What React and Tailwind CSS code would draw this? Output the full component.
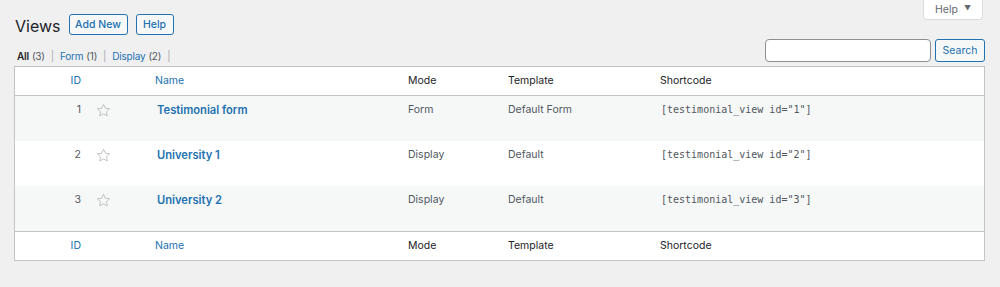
const rows = [
  { id: 1, name: 'Testimonial form', mode: 'Form', template: 'Default Form' },
  { id: 2, name: 'University 1', mode: 'Display', template: 'Default' },
  { id: 3, name: 'University 2', mode: 'Display', template: 'Default' },
];

function Star() {
  return (
    <svg width="15" height="15" viewBox="0 0 20 20" className="block">
      <path
        d="M10 1.8l2.45 5.2 5.65.7-4.15 3.9 1.05 5.6L10 14.45 5 17.2l1.05-5.6L1.9 7.7l5.65-.7z"
        fill="none"
        stroke="#b4b7ba"
        strokeWidth="1.1"
        strokeLinejoin="round"
      />
    </svg>
  );
}

function HeadRow({ top }) {
  return (
    <div className={`flex h-[29px] items-center ${top ? 'border-b' : 'border-t'} border-[#c3c4c7] text-[10.5px]`}>
      <div className="w-[66px] text-right text-[#2271b1]">ID</div>
      <div className="w-[74px]" />
      <div className="w-[253px] text-[#2271b1]">Name</div>
      <div className="w-[100px] text-[#1d2327]">Mode</div>
      <div className="w-[152px] text-[#1d2327]">Template</div>
      <div className="flex-1 text-[#1d2327]">Shortcode</div>
    </div>
  );
}

function Sep() {
  return <span className="mx-[3px] text-[#a7aaad]">|</span>;
}

export default function App() {
  return (
    <div className="relative h-[287px] w-[1000px] overflow-hidden bg-[#f0f0f1] font-['Inter',sans-serif] text-[#3c434a]">
      {/* screen meta help tab */}
      <div className="absolute right-[17px] top-0 flex h-[20px] w-[60px] items-center justify-center gap-[6px] rounded-b-[4px] border border-t-0 border-[#dcdcde] bg-white text-[10.5px] text-[#646970]">
        <span>Help</span>
        <span className="text-[7px]">▼</span>
      </div>

      <div className="flex h-[35px] items-start gap-[8px] pl-[15px] pt-[14px]">
        <h1 className="pt-[4px] text-[16px] leading-[17px] text-[#1d2327]">Views</h1>
        <button className="h-[21px] w-[59px] rounded-[3px] border border-[#2271b1] bg-[#f6f7f7] text-[10.5px] font-medium text-[#2271b1]">
          Add New
        </button>
        <button className="h-[21px] w-[38px] rounded-[3px] border border-[#2271b1] bg-[#f6f7f7] text-[10.5px] font-medium text-[#2271b1]">
          Help
        </button>
      </div>

      <div className="flex items-start justify-between pl-[17px] pr-[15px] pt-[4px]">
        <div className="mt-[10px] flex items-center gap-[3px] text-[10px] leading-[14px] tracking-[-0.2px]">
          <span className="font-semibold text-[#1d2327]">All</span>
          <span className="text-[#50575e]">(3)</span>
          <Sep />
          <span className="text-[#2271b1]">Form</span>
          <span className="text-[#50575e]">(1)</span>
          <Sep />
          <span className="text-[#2271b1]">Display</span>
          <span className="text-[#50575e]">(2)</span>
          <Sep />
        </div>
        <div className="flex gap-[4px]">
          <div className="h-[23px] w-[166px] rounded-[4px] border border-[#8c8f94] bg-white" />
          <button className="h-[23px] w-[50px] rounded-[3px] border border-[#2271b1] bg-[#f6f7f7] text-[10.5px] text-[#2271b1]">
            Search
          </button>
        </div>
      </div>

      <div className="ml-[14px] mt-[3px] w-[971px] border border-[#c3c4c7] bg-white">
        <HeadRow top />
        {rows.map((r, i) => (
          <div
            key={r.id}
            className={`flex h-[45px] items-start pt-[4px] text-[10.5px] leading-[20px] ${i % 2 === 0 ? 'bg-[#f6f7f7]' : 'bg-white'}`}
          >
            <div className="w-[66px] text-right text-[#50575e]">{r.id}</div>
            <div className="flex h-[20px] w-[74px] items-center pl-[15px]">
              <Star />
            </div>
            <div className="w-[253px] pl-[2px] text-[11.2px] font-semibold text-[#2271b1]">{r.name}</div>
            <div className="w-[100px] text-[#50575e]">{r.mode}</div>
            <div className="w-[152px] text-[#50575e]">{r.template}</div>
            <div className="flex-1 pl-[1px] font-['DejaVu_Sans_Mono',monospace] text-[10px] text-[#50575e]">
              [testimonial_view id="{r.id}"]
            </div>
          </div>
        ))}
        <HeadRow />
      </div>
    </div>
  );
}
